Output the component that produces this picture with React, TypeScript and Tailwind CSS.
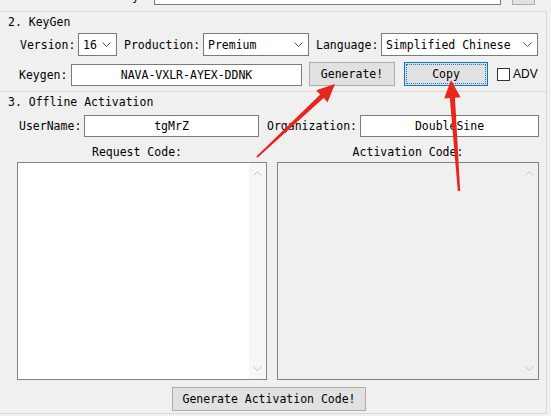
import React from "react";

const mono = "font-['DejaVu_Sans_Mono','Liberation_Mono',monospace]";

function Chevron({ className = "" }: { className?: string }) {
  return (
    <svg width="9" height="5" viewBox="0 0 9 5" className={className}>
      <path d="M0.5 0.5 L4.5 4.5 L8.5 0.5" fill="none" stroke="currentColor" strokeWidth="1" />
    </svg>
  );
}

function Select({ value, w }: { value: string; w: string }) {
  return (
    <div className={`${w} h-[23px] shrink-0 flex items-center justify-between bg-white border border-[#7a7a7a] pl-[4px] pr-[5px]`}>
      <span>{value}</span>
      <Chevron className="text-[#555]" />
    </div>
  );
}

function TextBox({ value, w, h = "h-[22px]" }: { value: string; w: string; h?: string }) {
  return (
    <div className={`${w} ${h} shrink-0 flex items-center justify-center bg-white border border-[#7a7a7a]`}>
      {value}
    </div>
  );
}

function CodeArea({ w, disabled }: { w: string; disabled?: boolean }) {
  return (
    <div className={`${w} h-[218px] shrink-0 flex justify-end border border-[#828282] ${disabled ? "bg-[#f0f0f0]" : "bg-white"}`}>
      <div className={`w-[17px] flex flex-col items-center justify-between py-[8px] ${disabled ? "bg-[#f0f0f0]" : "bg-[#f7f7f7]"}`}>
        <Chevron className="text-[#c4c4c4] rotate-180" />
        <Chevron className="text-[#c4c4c4]" />
      </div>
    </div>
  );
}

function Arrows() {
  return (
    <svg className="absolute inset-0 pointer-events-none" width="551" height="416" viewBox="0 0 551 416">
      <polygon
        fill="#e8261b"
        points="257.5,157.8 323.6,98.1 327.6,102.3 335,84 316.2,90.3 320.2,94.5 256.3,156.4"
      />
      <polygon
        fill="#e8261b"
        points="460.2,190.9 455,97.7 460.5,97.3 451,80 444.2,98.5 449.8,98.1 457.8,191.1"
      />
    </svg>
  );
}

export default function App() {
  return (
    <div className={`relative w-[551px] h-[416px] overflow-hidden bg-[#f0f0f0] text-[11.5px] leading-[14px] text-black ${mono}`}>
      {/* section 1, mostly scrolled out */}
      <div className="h-[11px] overflow-hidden">
        <div className="flex items-end -mt-[18px]">
          <div className="w-[150px] text-right pr-[4px] pb-[2px] leading-[14px]">Directory:</div>
          <div className="ml-[4px] w-[347px] h-[23px] bg-white border border-[#7a7a7a]" />
          <div className="ml-[11px] w-[23px] h-[23px] bg-[#e1e1e1] border border-[#adadad]" />
        </div>
      </div>

      {/* 2. KeyGen */}
      <div className="h-[80px] mr-[4px] border-t border-r border-[#d9d9d9]">
        <div className="pl-[8px] mt-[3px] h-[14px]">2. KeyGen</div>
        <div className="flex items-center mt-[4px] pl-[20px] h-[23px]">
          <span className="w-[58px] shrink-0">Version:</span>
          <Select value="16" w="w-[39px]" />
          <span className="ml-[7px] w-[79px] shrink-0">Production:</span>
          <Select value="Premium" w="w-[106px]" />
          <span className="ml-[7px] w-[65px] shrink-0">Language:</span>
          <Select value="Simplified Chinese" w="w-[157px]" />
        </div>
        <div className="flex items-end mt-[6px] pl-[19px] h-[24px]">
          <span className="w-[52px] shrink-0 self-center pt-[2px]">Keygen:</span>
          <TextBox value="NAVA-VXLR-AYEX-DDNK" w="w-[231px]" />
          <button className="ml-[7px] w-[86px] h-[24px] shrink-0 bg-[#e1e1e1] border border-[#adadad]">Generate!</button>
          <button className="ml-[9px] w-[84px] h-[24px] shrink-0 bg-[#e1e1e1] border border-[#0078d7] p-[1px]">
            <div className="w-full h-full flex items-center justify-center border border-dotted border-[#2a6fb8]">Copy</div>
          </button>
          <div className="ml-[9px] self-center flex items-center">
            <div className="w-[13px] h-[13px] bg-white border border-[#333]" />
            <span className="ml-[3px] font-['Liberation_Sans',sans-serif] text-[12px]">ADV</span>
          </div>
        </div>
      </div>

      {/* 3. Offline Activation */}
      <div className="h-[323px] mr-[4px] border-t border-r border-b border-[#d9d9d9]">
        <div className="pl-[8px] mt-[3px] h-[14px]">3. Offline Activation</div>
        <div className="flex items-center mt-[6px] pl-[19px] h-[22px]">
          <span className="w-[65px] shrink-0">UserName:</span>
          <TextBox value="tgMrZ" w="w-[175px]" />
          <span className="ml-[8px] w-[93px] shrink-0">Organization:</span>
          <TextBox value="DoubleSine" w="w-[179px]" />
        </div>
        <div className="flex mt-[8px] h-[14px]">
          <div className="ml-[17px] w-[250px] text-center pr-[10px]">Request Code:</div>
          <div className="ml-[10px] w-[262px] text-center">Activation Code:</div>
        </div>
        <div className="flex mt-[3px]">
          <div className="ml-[17px]">
            <CodeArea w="w-[250px]" />
          </div>
          <div className="ml-[10px]">
            <CodeArea w="w-[262px]" disabled />
          </div>
        </div>
        <button className="block ml-[172px] mt-[7px] w-[194px] h-[24px] bg-[#e1e1e1] border border-[#adadad]">
          Generate Activation Code!
        </button>
      </div>

      <Arrows />
    </div>
  );
}
